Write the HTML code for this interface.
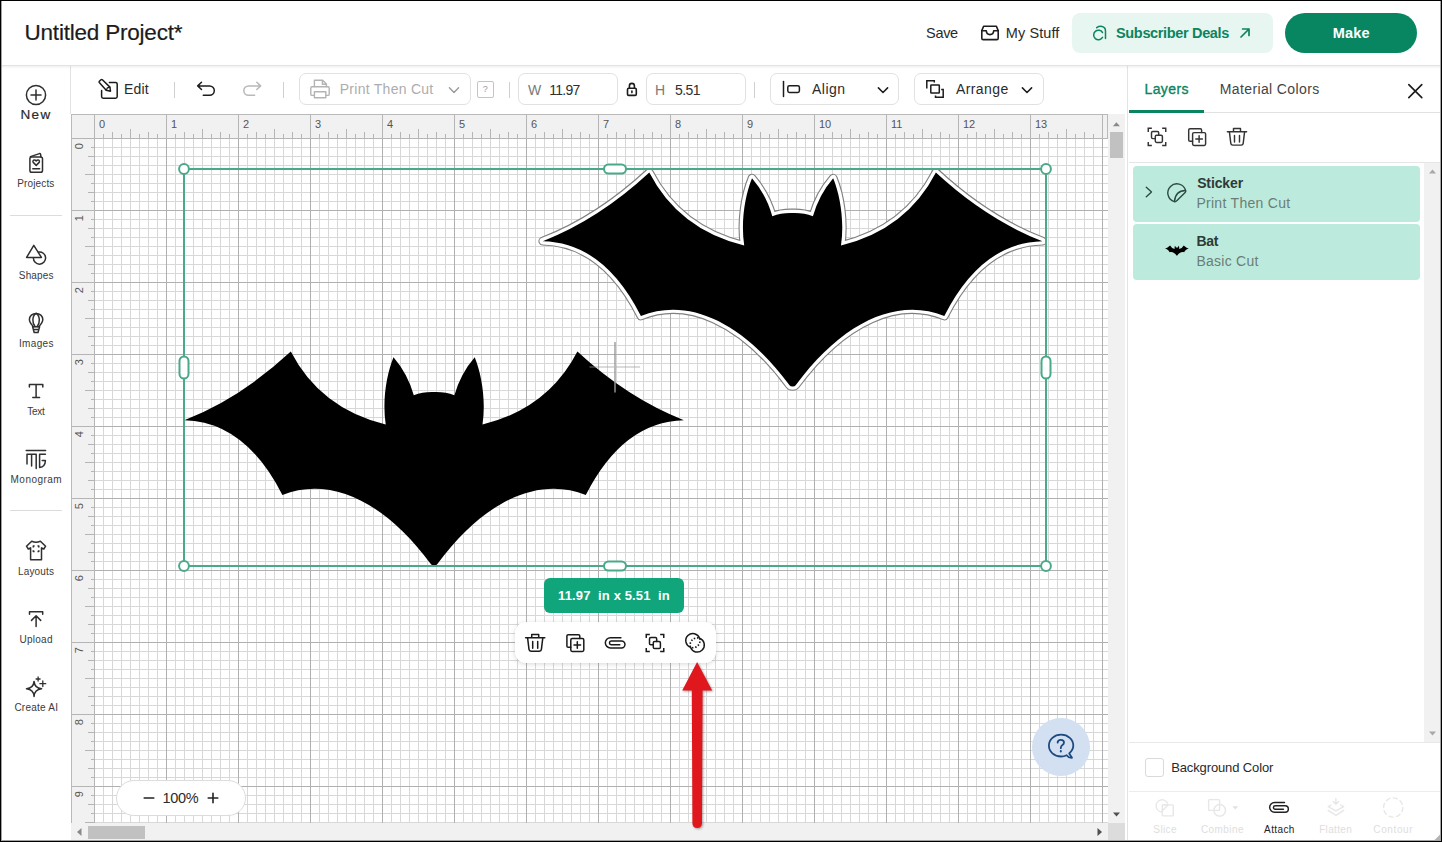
<!DOCTYPE html>
<html><head><meta charset="utf-8"><title>Design Space</title>
<style>
*{box-sizing:border-box;margin:0;padding:0}
html,body{width:1442px;height:842px;overflow:hidden;background:#fff}
body{font-family:"Liberation Sans",sans-serif;color:#222;position:relative}
#root{position:absolute;left:0;top:0;width:1442px;height:842px;overflow:hidden;background:#fff}
.abs{position:absolute}
.t{position:absolute;white-space:nowrap;line-height:1}
.rl{font-family:"Liberation Sans",sans-serif;font-size:11px;fill:#555}
svg{overflow:visible}
.ic{position:absolute;fill:none;stroke:#222;stroke-width:1.5;stroke-linecap:round;stroke-linejoin:round}
.box{position:absolute;border:1px solid #e1e1e1;border-radius:7px;background:#fff}
.vd{position:absolute;width:1px;background:#d0d0d0}
.sl{position:absolute;font-size:10px;color:#333;width:72px;left:0;text-align:center;line-height:1}
</style></head><body>
<div id="root">
<!-- HEADER -->
<div class="abs" id="hdr" style="left:0;top:0;width:1442px;height:66px;background:#fff;border-bottom:1px solid #e3e3e3"></div>
<span class="t" style="left:24.51px;top:22.15px;font-size:22.5px;color:#1c1c1c;letter-spacing:-0.206px;-webkit-text-stroke:0.2px #1c1c1c;">Untitled Project*</span>
<span class="t" style="left:926.05px;top:25.93px;font-size:14.5px;color:#2a2a2a;letter-spacing:-0.309px;">Save</span>
<svg class="ic" style="left:980px;top:24px;stroke:#1c1c1c;stroke-width:1.6" width="20" height="18" viewBox="0 0 20 18"><path d="M3.6,2.2H16.4L18.2,6.6V14.2Q18.2,15.6 16.8,15.6H3.2Q1.8,15.6 1.8,14.2V6.6Z"/><path d="M1.8,6.8H6.3Q6.5,10.6 10,10.6Q13.5,10.6 13.7,6.8H18.2"/></svg>
<span class="t" style="left:1005.74px;top:25.93px;font-size:14.5px;color:#2a2a2a;letter-spacing:0.105px;">My Stuff</span>
<div class="abs" style="left:1072px;top:13px;width:200.5px;height:39.5px;border-radius:8px;background:#e7f6f0"></div>
<svg class="ic" style="left:0;top:0;stroke:#0b8461;stroke-width:1.5;" width="1442" height="842" viewBox="0 0 1442 842"><path d="M1102.5,32.5A4.75,4.75 0 1 0 1102.5,37.4"/><path d="M1096.7,27.7C1099.4,25.8 1105.5,25.2 1105.5,31.2V38.6"/></svg>
<span class="t" style="left:1116.04px;top:25.93px;font-size:14.5px;font-weight:bold;color:#0b8461;letter-spacing:-0.346px;">Subscriber Deals</span>
<svg class="ic" style="left:1238px;top:26px;stroke:#0b8461;stroke-width:1.7" width="14" height="14" viewBox="0 0 14 14"><path d="M3,11L11,3M4.6,3H11V9.4"/></svg>
<div class="abs" style="left:1285px;top:13px;width:132px;height:39.5px;border-radius:20px;background:#088561"></div>
<span class="t" style="left:1332.86px;top:25.63px;font-size:14.5px;font-weight:bold;color:#fff;letter-spacing:0.109px;">Make</span>
<!-- SIDEBAR -->
<div class="abs" id="side" style="left:0;top:66px;width:71px;height:776px;background:#fff"></div>
<div class="abs" style="left:70px;top:66px;width:1px;height:48px;background:#e2e2e2"></div>
<div class="abs" style="left:10px;top:215px;width:52px;height:1px;background:#dcdcdc"></div>
<div class="abs" style="left:10px;top:510px;width:52px;height:1px;background:#dcdcdc"></div>
<svg class="ic" style="left:0;top:0;stroke:#2f2f2f;stroke-width:1.5;" width="1442" height="842" viewBox="0 0 1442 842"><circle cx="36" cy="95" r="9.6"/><path d="M36,90V100M31,95H41"/><rect x="29.9" y="157" width="12.6" height="15.2" rx="1.8"/><path d="M30.4,156.6L39.4,153.6Q40.4,153.4 40.6,154.4L40.9,156.8"/><path d="M36.2,165.4L33.2,162.4Q32.4,161 33.6,160.2Q35,159.4 36.2,161Q37.4,159.4 38.8,160.2Q40,161 39.2,162.4Z"/><path d="M32.8,168.7H39.6"/><path d="M33.8,245.4L26.6,257.4H41.4Z"/><path d="M38.6,252A6.1,6.1 0 1 1 33.4,257.8"/><path d="M33.4,326.8C31,324 29.4,322.4 29.4,319.6C29.4,316 32.4,313.4 36.1,313.4C39.8,313.4 42.8,316 42.8,319.6C42.8,322.4 41.2,324 38.8,326.8"/><path d="M36.1,313.4C31.8,316 32.2,323.2 35,326.6M36.1,313.4C40.4,316 40,323.2 37.2,326.6"/><path d="M32.6,326.8H39.6L38,332.5H34.2ZM33.5,329.6H38.7"/><path d="M29.4,387V384.4H42.8V387M36.1,384.4V397.4M32.8,397.4H39.6"/><path d="M26.2,450.4H45.6M27,464V454.2H36.2V468.6M31.6,454.2V466M45.4,454.2H39.6V467.6Q45.2,467 45.4,460.6H42.2"/><path d="M31.7,541.2Q36,543.4 40.4,541.2L45.6,546.2L43.8,549L41.5,547.8V559.8H30.6V547.8L28.3,549L26.5,546.2Z"/><path d="M33.3,547.4V546.1H34.6M37.5,546.1H38.8V547.4M38.8,550.3V551.6H37.5M34.6,551.6H33.3V550.3" stroke-linecap="butt"/><path d="M29.5,614.2V611.7H42.7V614.2M36.1,626.4V615.8M31.5,620.4L36.1,615.8L40.7,620.4"/><path d="M34.05,681.4Q34.6,688.2 41.6,688.8Q34.6,689.4 34.05,696.4Q33.5,689.4 26.5,688.8Q33.5,688.2 34.05,681.4Z"/><path d="M38.1,677V681M36.1,679H40.1M42.8,680.8V686.6M39.9,683.7H45.7" stroke-width="1.3"/></svg>
<span class="t" style="left:20.42px;top:108.37px;font-size:13.5px;color:#2b2b2b;letter-spacing:1.456px;-webkit-text-stroke:0.2px #2b2b2b;">New</span>
<span class="t" style="left:17.20px;top:178.83px;font-size:10px;color:#3a3a3a;letter-spacing:0.150px;">Projects</span>
<span class="t" style="left:18.85px;top:270.63px;font-size:10px;color:#3a3a3a;letter-spacing:0.140px;">Shapes</span>
<span class="t" style="left:19.00px;top:338.63px;font-size:10px;color:#3a3a3a;letter-spacing:0.330px;">Images</span>
<span class="t" style="left:27.20px;top:407.04px;font-size:10px;color:#3a3a3a;letter-spacing:-0.233px;">Text</span>
<span class="t" style="left:10.60px;top:474.63px;font-size:10px;color:#3a3a3a;letter-spacing:0.450px;">Monogram</span>
<span class="t" style="left:17.90px;top:566.74px;font-size:10px;color:#3a3a3a;letter-spacing:0.183px;">Layouts</span>
<span class="t" style="left:19.45px;top:634.63px;font-size:10px;color:#3a3a3a;letter-spacing:0.270px;">Upload</span>
<span class="t" style="left:14.40px;top:703.03px;font-size:10px;color:#3a3a3a;letter-spacing:0.238px;">Create AI</span>
<!-- TOOLBAR -->
<div class="abs" id="tb" style="left:72px;top:66px;width:1056px;height:49px;background:#fff"></div>
<div class="vd" style="left:174px;top:82px;height:16px"></div>
<div class="vd" style="left:283px;top:82px;height:16px"></div>
<div class="vd" style="left:509px;top:82px;height:16px"></div>
<div class="vd" style="left:754px;top:82px;height:16px"></div>
<div class="box" style="left:299px;top:73px;width:171.5px;height:32px"></div>
<div class="box" style="left:518px;top:73px;width:99.5px;height:32px"></div>
<div class="box" style="left:646px;top:73px;width:99.5px;height:32px"></div>
<div class="box" style="left:770px;top:73px;width:129px;height:32px"></div>
<div class="box" style="left:914px;top:73px;width:129.5px;height:32px"></div>
<div class="abs" style="left:476.5px;top:80.5px;width:17.5px;height:17px;border:1px solid #c4c4c4;border-radius:2px"></div>
<span class="t" style="left:482.84px;top:84.68px;font-size:9px;color:#999;letter-spacing:-0.520px;">?</span>
<svg class="ic" style="left:0;top:0;stroke:#1c1c1c;stroke-width:1.5;" width="1442" height="842" viewBox="0 0 1442 842"><path d="M109.4,82.4H115.6Q117.2,82.4 117.2,84V96.6Q117.2,98.2 115.6,98.2H103.2Q101.6,98.2 101.6,96.6V90.4"/><path d="M99.3,82.6Q98.7,81.9 99.4,81.2L100.9,79.8Q101.7,79.2 102.4,79.8L109.9,87.1L110.5,91.2L106.2,90.2Z"/><path d="M109.9,87.1L107.4,87.9L106.2,90.2" stroke-width="1.2"/><path d="M201.5,82.3L197.7,85.9L201.5,89.5M197.9,85.9H209.6A4.7,4.7 0 0 1 209.6,95.3H203.3"/></svg>
<svg class="ic" style="left:0;top:0;stroke:#b9b9b9;stroke-width:1.5;" width="1442" height="842" viewBox="0 0 1442 842"><path d="M256.8,82.3L260.6,85.9L256.8,89.5M260.4,85.9H248.5A4.7,4.7 0 0 0 248.5,95.3H254.6"/></svg>
<span class="t" style="left:124.08px;top:81.85px;font-size:14px;color:#2a2a2a;letter-spacing:0.180px;">Edit</span>
<svg class="ic" style="left:0;top:0;stroke:#b3b3b3;stroke-width:1.4;" width="1442" height="842" viewBox="0 0 1442 842"><path d="M314.4,86.6V80.2H322.6L326.4,84V86.6M322.4,80.4V84.2H326.2"/><path d="M314.2,95.4H312Q310.8,95.4 310.8,94.2V88Q310.8,86.8 312,86.8H328Q329.2,86.8 329.2,88V94.2Q329.2,95.4 328,95.4H326"/><path d="M314.4,91.8H325.8V97.8H314.4Z"/></svg>
<span class="t" style="left:339.78px;top:81.85px;font-size:14px;color:#adadad;letter-spacing:0.267px;">Print Then Cut</span>
<svg class="ic" style="left:0;top:0;stroke:#9a9a9a;stroke-width:1.4;" width="1442" height="842" viewBox="0 0 1442 842"><path d="M449.4,87.8L454,92.4L458.6,87.8"/></svg>
<span class="t" style="left:527.90px;top:82.95px;font-size:14px;color:#7a7a7a;letter-spacing:-1.630px;">W</span>
<span class="t" style="left:549.15px;top:82.95px;font-size:14px;color:#2f2f2f;letter-spacing:-0.693px;">11.97</span>
<span class="t" style="left:655.08px;top:82.95px;font-size:14px;color:#7a7a7a;letter-spacing:0.190px;">H</span>
<span class="t" style="left:675.04px;top:82.95px;font-size:14px;color:#2f2f2f;letter-spacing:-0.613px;">5.51</span>
<svg class="ic" style="left:0;top:0;stroke:#1c1c1c;stroke-width:1.6;" width="1442" height="842" viewBox="0 0 1442 842"><rect x="627.5" y="88.2" width="8.8" height="7.2" rx="1.2"/><path d="M629.4,88V86A2.5,2.6 0 0 1 634.4,86V88"/><path d="M631.9,91V92.6" stroke-width="1.6"/></svg>
<svg class="ic" style="left:0;top:0;stroke:#1c1c1c;stroke-width:1.5;" width="1442" height="842" viewBox="0 0 1442 842"><path d="M783.5,81.6V96.4"/><rect x="787.8" y="85.7" width="11.6" height="6.7" rx="1.6"/></svg>
<span class="t" style="left:812.00px;top:81.85px;font-size:14px;color:#2a2a2a;letter-spacing:0.497px;">Align</span>
<svg class="ic" style="left:0;top:0;stroke:#1c1c1c;stroke-width:1.5;" width="1442" height="842" viewBox="0 0 1442 842"><path d="M878.4,87.9L883,92.5L887.6,87.9M1022.4,87.9L1027,92.5L1031.6,87.9"/></svg>
<svg class="ic" style="left:0;top:0;stroke:#1c1c1c;stroke-width:1.5;" width="1442" height="842" viewBox="0 0 1442 842"><rect x="930.8" y="84.9" width="8.5" height="8.1" rx="0.5"/><path d="M926.8,88.6V80.7H934.3V82.6M935.5,95.4V97.2H943.2V89.5H941.2" stroke-linecap="butt" stroke-linejoin="miter"/></svg>
<span class="t" style="left:956.00px;top:81.85px;font-size:14px;color:#2a2a2a;letter-spacing:0.398px;">Arrange</span>
<!-- CANVAS -->
<svg id="cv" width="1037" height="709" viewBox="71 114 1037 709" style="position:absolute;left:71px;top:114px;overflow:hidden">
<defs>
<pattern id="gmin" x="94" y="138" width="9" height="9" patternUnits="userSpaceOnUse"><path d="M0.5,0V9M0,0.5H9" stroke="#d8d8d8" stroke-width="1" fill="none"/></pattern>
<pattern id="gmaj" x="94" y="138" width="72" height="72" patternUnits="userSpaceOnUse"><path d="M0.5,0V72M0,0.5H72" stroke="#b0b0b0" stroke-width="1" fill="none"/></pattern>
</defs>
<rect x="71" y="114" width="1037" height="709" fill="#fff"/>
<rect x="94" y="138" width="1014" height="685" fill="url(#gmin)"/>
<rect x="94" y="138" width="1014" height="685" fill="url(#gmaj)"/>
<rect x="71" y="114" width="1037" height="24" fill="#f1f1f1"/>
<rect x="71" y="114" width="23" height="709" fill="#f1f1f1"/>
<g shape-rendering="crispEdges">
<line x1="94.5" y1="114" x2="94.5" y2="138" stroke="#b5b5b5"/>
<text x="99.0" y="127.5" class="rl">0</text>
<line x1="103.5" y1="134" x2="103.5" y2="138" stroke="#b5b5b5"/>
<line x1="112.5" y1="131.5" x2="112.5" y2="138" stroke="#b5b5b5"/>
<line x1="121.5" y1="134" x2="121.5" y2="138" stroke="#b5b5b5"/>
<line x1="130.5" y1="129" x2="130.5" y2="138" stroke="#b5b5b5"/>
<line x1="139.5" y1="134" x2="139.5" y2="138" stroke="#b5b5b5"/>
<line x1="148.5" y1="131.5" x2="148.5" y2="138" stroke="#b5b5b5"/>
<line x1="157.5" y1="134" x2="157.5" y2="138" stroke="#b5b5b5"/>
<line x1="166.5" y1="114" x2="166.5" y2="138" stroke="#b5b5b5"/>
<text x="171.0" y="127.5" class="rl">1</text>
<line x1="175.5" y1="134" x2="175.5" y2="138" stroke="#b5b5b5"/>
<line x1="184.5" y1="131.5" x2="184.5" y2="138" stroke="#b5b5b5"/>
<line x1="193.5" y1="134" x2="193.5" y2="138" stroke="#b5b5b5"/>
<line x1="202.5" y1="129" x2="202.5" y2="138" stroke="#b5b5b5"/>
<line x1="211.5" y1="134" x2="211.5" y2="138" stroke="#b5b5b5"/>
<line x1="220.5" y1="131.5" x2="220.5" y2="138" stroke="#b5b5b5"/>
<line x1="229.5" y1="134" x2="229.5" y2="138" stroke="#b5b5b5"/>
<line x1="238.5" y1="114" x2="238.5" y2="138" stroke="#b5b5b5"/>
<text x="243.0" y="127.5" class="rl">2</text>
<line x1="247.5" y1="134" x2="247.5" y2="138" stroke="#b5b5b5"/>
<line x1="256.5" y1="131.5" x2="256.5" y2="138" stroke="#b5b5b5"/>
<line x1="265.5" y1="134" x2="265.5" y2="138" stroke="#b5b5b5"/>
<line x1="274.5" y1="129" x2="274.5" y2="138" stroke="#b5b5b5"/>
<line x1="283.5" y1="134" x2="283.5" y2="138" stroke="#b5b5b5"/>
<line x1="292.5" y1="131.5" x2="292.5" y2="138" stroke="#b5b5b5"/>
<line x1="301.5" y1="134" x2="301.5" y2="138" stroke="#b5b5b5"/>
<line x1="310.5" y1="114" x2="310.5" y2="138" stroke="#b5b5b5"/>
<text x="315.0" y="127.5" class="rl">3</text>
<line x1="319.5" y1="134" x2="319.5" y2="138" stroke="#b5b5b5"/>
<line x1="328.5" y1="131.5" x2="328.5" y2="138" stroke="#b5b5b5"/>
<line x1="337.5" y1="134" x2="337.5" y2="138" stroke="#b5b5b5"/>
<line x1="346.5" y1="129" x2="346.5" y2="138" stroke="#b5b5b5"/>
<line x1="355.5" y1="134" x2="355.5" y2="138" stroke="#b5b5b5"/>
<line x1="364.5" y1="131.5" x2="364.5" y2="138" stroke="#b5b5b5"/>
<line x1="373.5" y1="134" x2="373.5" y2="138" stroke="#b5b5b5"/>
<line x1="382.5" y1="114" x2="382.5" y2="138" stroke="#b5b5b5"/>
<text x="387.0" y="127.5" class="rl">4</text>
<line x1="391.5" y1="134" x2="391.5" y2="138" stroke="#b5b5b5"/>
<line x1="400.5" y1="131.5" x2="400.5" y2="138" stroke="#b5b5b5"/>
<line x1="409.5" y1="134" x2="409.5" y2="138" stroke="#b5b5b5"/>
<line x1="418.5" y1="129" x2="418.5" y2="138" stroke="#b5b5b5"/>
<line x1="427.5" y1="134" x2="427.5" y2="138" stroke="#b5b5b5"/>
<line x1="436.5" y1="131.5" x2="436.5" y2="138" stroke="#b5b5b5"/>
<line x1="445.5" y1="134" x2="445.5" y2="138" stroke="#b5b5b5"/>
<line x1="454.5" y1="114" x2="454.5" y2="138" stroke="#b5b5b5"/>
<text x="459.0" y="127.5" class="rl">5</text>
<line x1="463.5" y1="134" x2="463.5" y2="138" stroke="#b5b5b5"/>
<line x1="472.5" y1="131.5" x2="472.5" y2="138" stroke="#b5b5b5"/>
<line x1="481.5" y1="134" x2="481.5" y2="138" stroke="#b5b5b5"/>
<line x1="490.5" y1="129" x2="490.5" y2="138" stroke="#b5b5b5"/>
<line x1="499.5" y1="134" x2="499.5" y2="138" stroke="#b5b5b5"/>
<line x1="508.5" y1="131.5" x2="508.5" y2="138" stroke="#b5b5b5"/>
<line x1="517.5" y1="134" x2="517.5" y2="138" stroke="#b5b5b5"/>
<line x1="526.5" y1="114" x2="526.5" y2="138" stroke="#b5b5b5"/>
<text x="531.0" y="127.5" class="rl">6</text>
<line x1="535.5" y1="134" x2="535.5" y2="138" stroke="#b5b5b5"/>
<line x1="544.5" y1="131.5" x2="544.5" y2="138" stroke="#b5b5b5"/>
<line x1="553.5" y1="134" x2="553.5" y2="138" stroke="#b5b5b5"/>
<line x1="562.5" y1="129" x2="562.5" y2="138" stroke="#b5b5b5"/>
<line x1="571.5" y1="134" x2="571.5" y2="138" stroke="#b5b5b5"/>
<line x1="580.5" y1="131.5" x2="580.5" y2="138" stroke="#b5b5b5"/>
<line x1="589.5" y1="134" x2="589.5" y2="138" stroke="#b5b5b5"/>
<line x1="598.5" y1="114" x2="598.5" y2="138" stroke="#b5b5b5"/>
<text x="603.0" y="127.5" class="rl">7</text>
<line x1="607.5" y1="134" x2="607.5" y2="138" stroke="#b5b5b5"/>
<line x1="616.5" y1="131.5" x2="616.5" y2="138" stroke="#b5b5b5"/>
<line x1="625.5" y1="134" x2="625.5" y2="138" stroke="#b5b5b5"/>
<line x1="634.5" y1="129" x2="634.5" y2="138" stroke="#b5b5b5"/>
<line x1="643.5" y1="134" x2="643.5" y2="138" stroke="#b5b5b5"/>
<line x1="652.5" y1="131.5" x2="652.5" y2="138" stroke="#b5b5b5"/>
<line x1="661.5" y1="134" x2="661.5" y2="138" stroke="#b5b5b5"/>
<line x1="670.5" y1="114" x2="670.5" y2="138" stroke="#b5b5b5"/>
<text x="675.0" y="127.5" class="rl">8</text>
<line x1="679.5" y1="134" x2="679.5" y2="138" stroke="#b5b5b5"/>
<line x1="688.5" y1="131.5" x2="688.5" y2="138" stroke="#b5b5b5"/>
<line x1="697.5" y1="134" x2="697.5" y2="138" stroke="#b5b5b5"/>
<line x1="706.5" y1="129" x2="706.5" y2="138" stroke="#b5b5b5"/>
<line x1="715.5" y1="134" x2="715.5" y2="138" stroke="#b5b5b5"/>
<line x1="724.5" y1="131.5" x2="724.5" y2="138" stroke="#b5b5b5"/>
<line x1="733.5" y1="134" x2="733.5" y2="138" stroke="#b5b5b5"/>
<line x1="742.5" y1="114" x2="742.5" y2="138" stroke="#b5b5b5"/>
<text x="747.0" y="127.5" class="rl">9</text>
<line x1="751.5" y1="134" x2="751.5" y2="138" stroke="#b5b5b5"/>
<line x1="760.5" y1="131.5" x2="760.5" y2="138" stroke="#b5b5b5"/>
<line x1="769.5" y1="134" x2="769.5" y2="138" stroke="#b5b5b5"/>
<line x1="778.5" y1="129" x2="778.5" y2="138" stroke="#b5b5b5"/>
<line x1="787.5" y1="134" x2="787.5" y2="138" stroke="#b5b5b5"/>
<line x1="796.5" y1="131.5" x2="796.5" y2="138" stroke="#b5b5b5"/>
<line x1="805.5" y1="134" x2="805.5" y2="138" stroke="#b5b5b5"/>
<line x1="814.5" y1="114" x2="814.5" y2="138" stroke="#b5b5b5"/>
<text x="819.0" y="127.5" class="rl">10</text>
<line x1="823.5" y1="134" x2="823.5" y2="138" stroke="#b5b5b5"/>
<line x1="832.5" y1="131.5" x2="832.5" y2="138" stroke="#b5b5b5"/>
<line x1="841.5" y1="134" x2="841.5" y2="138" stroke="#b5b5b5"/>
<line x1="850.5" y1="129" x2="850.5" y2="138" stroke="#b5b5b5"/>
<line x1="859.5" y1="134" x2="859.5" y2="138" stroke="#b5b5b5"/>
<line x1="868.5" y1="131.5" x2="868.5" y2="138" stroke="#b5b5b5"/>
<line x1="877.5" y1="134" x2="877.5" y2="138" stroke="#b5b5b5"/>
<line x1="886.5" y1="114" x2="886.5" y2="138" stroke="#b5b5b5"/>
<text x="891.0" y="127.5" class="rl">11</text>
<line x1="895.5" y1="134" x2="895.5" y2="138" stroke="#b5b5b5"/>
<line x1="904.5" y1="131.5" x2="904.5" y2="138" stroke="#b5b5b5"/>
<line x1="913.5" y1="134" x2="913.5" y2="138" stroke="#b5b5b5"/>
<line x1="922.5" y1="129" x2="922.5" y2="138" stroke="#b5b5b5"/>
<line x1="931.5" y1="134" x2="931.5" y2="138" stroke="#b5b5b5"/>
<line x1="940.5" y1="131.5" x2="940.5" y2="138" stroke="#b5b5b5"/>
<line x1="949.5" y1="134" x2="949.5" y2="138" stroke="#b5b5b5"/>
<line x1="958.5" y1="114" x2="958.5" y2="138" stroke="#b5b5b5"/>
<text x="963.0" y="127.5" class="rl">12</text>
<line x1="967.5" y1="134" x2="967.5" y2="138" stroke="#b5b5b5"/>
<line x1="976.5" y1="131.5" x2="976.5" y2="138" stroke="#b5b5b5"/>
<line x1="985.5" y1="134" x2="985.5" y2="138" stroke="#b5b5b5"/>
<line x1="994.5" y1="129" x2="994.5" y2="138" stroke="#b5b5b5"/>
<line x1="1003.5" y1="134" x2="1003.5" y2="138" stroke="#b5b5b5"/>
<line x1="1012.5" y1="131.5" x2="1012.5" y2="138" stroke="#b5b5b5"/>
<line x1="1021.5" y1="134" x2="1021.5" y2="138" stroke="#b5b5b5"/>
<line x1="1030.5" y1="114" x2="1030.5" y2="138" stroke="#b5b5b5"/>
<text x="1035.0" y="127.5" class="rl">13</text>
<line x1="1039.5" y1="134" x2="1039.5" y2="138" stroke="#b5b5b5"/>
<line x1="1048.5" y1="131.5" x2="1048.5" y2="138" stroke="#b5b5b5"/>
<line x1="1057.5" y1="134" x2="1057.5" y2="138" stroke="#b5b5b5"/>
<line x1="1066.5" y1="129" x2="1066.5" y2="138" stroke="#b5b5b5"/>
<line x1="1075.5" y1="134" x2="1075.5" y2="138" stroke="#b5b5b5"/>
<line x1="1084.5" y1="131.5" x2="1084.5" y2="138" stroke="#b5b5b5"/>
<line x1="1093.5" y1="134" x2="1093.5" y2="138" stroke="#b5b5b5"/>
<line x1="1102.5" y1="114" x2="1102.5" y2="138" stroke="#b5b5b5"/>
<text x="1107.0" y="127.5" class="rl">14</text>
<line x1="71" y1="138.5" x2="94" y2="138.5" stroke="#b5b5b5"/>
<text transform="translate(82.5,143.0) rotate(-90)" text-anchor="end" class="rl">0</text>
<line x1="90.5" y1="147.5" x2="94" y2="147.5" stroke="#b5b5b5"/>
<line x1="88" y1="156.5" x2="94" y2="156.5" stroke="#b5b5b5"/>
<line x1="90.5" y1="165.5" x2="94" y2="165.5" stroke="#b5b5b5"/>
<line x1="84.5" y1="174.5" x2="94" y2="174.5" stroke="#b5b5b5"/>
<line x1="90.5" y1="183.5" x2="94" y2="183.5" stroke="#b5b5b5"/>
<line x1="88" y1="192.5" x2="94" y2="192.5" stroke="#b5b5b5"/>
<line x1="90.5" y1="201.5" x2="94" y2="201.5" stroke="#b5b5b5"/>
<line x1="71" y1="210.5" x2="94" y2="210.5" stroke="#b5b5b5"/>
<text transform="translate(82.5,215.0) rotate(-90)" text-anchor="end" class="rl">1</text>
<line x1="90.5" y1="219.5" x2="94" y2="219.5" stroke="#b5b5b5"/>
<line x1="88" y1="228.5" x2="94" y2="228.5" stroke="#b5b5b5"/>
<line x1="90.5" y1="237.5" x2="94" y2="237.5" stroke="#b5b5b5"/>
<line x1="84.5" y1="246.5" x2="94" y2="246.5" stroke="#b5b5b5"/>
<line x1="90.5" y1="255.5" x2="94" y2="255.5" stroke="#b5b5b5"/>
<line x1="88" y1="264.5" x2="94" y2="264.5" stroke="#b5b5b5"/>
<line x1="90.5" y1="273.5" x2="94" y2="273.5" stroke="#b5b5b5"/>
<line x1="71" y1="282.5" x2="94" y2="282.5" stroke="#b5b5b5"/>
<text transform="translate(82.5,287.0) rotate(-90)" text-anchor="end" class="rl">2</text>
<line x1="90.5" y1="291.5" x2="94" y2="291.5" stroke="#b5b5b5"/>
<line x1="88" y1="300.5" x2="94" y2="300.5" stroke="#b5b5b5"/>
<line x1="90.5" y1="309.5" x2="94" y2="309.5" stroke="#b5b5b5"/>
<line x1="84.5" y1="318.5" x2="94" y2="318.5" stroke="#b5b5b5"/>
<line x1="90.5" y1="327.5" x2="94" y2="327.5" stroke="#b5b5b5"/>
<line x1="88" y1="336.5" x2="94" y2="336.5" stroke="#b5b5b5"/>
<line x1="90.5" y1="345.5" x2="94" y2="345.5" stroke="#b5b5b5"/>
<line x1="71" y1="354.5" x2="94" y2="354.5" stroke="#b5b5b5"/>
<text transform="translate(82.5,359.0) rotate(-90)" text-anchor="end" class="rl">3</text>
<line x1="90.5" y1="363.5" x2="94" y2="363.5" stroke="#b5b5b5"/>
<line x1="88" y1="372.5" x2="94" y2="372.5" stroke="#b5b5b5"/>
<line x1="90.5" y1="381.5" x2="94" y2="381.5" stroke="#b5b5b5"/>
<line x1="84.5" y1="390.5" x2="94" y2="390.5" stroke="#b5b5b5"/>
<line x1="90.5" y1="399.5" x2="94" y2="399.5" stroke="#b5b5b5"/>
<line x1="88" y1="408.5" x2="94" y2="408.5" stroke="#b5b5b5"/>
<line x1="90.5" y1="417.5" x2="94" y2="417.5" stroke="#b5b5b5"/>
<line x1="71" y1="426.5" x2="94" y2="426.5" stroke="#b5b5b5"/>
<text transform="translate(82.5,431.0) rotate(-90)" text-anchor="end" class="rl">4</text>
<line x1="90.5" y1="435.5" x2="94" y2="435.5" stroke="#b5b5b5"/>
<line x1="88" y1="444.5" x2="94" y2="444.5" stroke="#b5b5b5"/>
<line x1="90.5" y1="453.5" x2="94" y2="453.5" stroke="#b5b5b5"/>
<line x1="84.5" y1="462.5" x2="94" y2="462.5" stroke="#b5b5b5"/>
<line x1="90.5" y1="471.5" x2="94" y2="471.5" stroke="#b5b5b5"/>
<line x1="88" y1="480.5" x2="94" y2="480.5" stroke="#b5b5b5"/>
<line x1="90.5" y1="489.5" x2="94" y2="489.5" stroke="#b5b5b5"/>
<line x1="71" y1="498.5" x2="94" y2="498.5" stroke="#b5b5b5"/>
<text transform="translate(82.5,503.0) rotate(-90)" text-anchor="end" class="rl">5</text>
<line x1="90.5" y1="507.5" x2="94" y2="507.5" stroke="#b5b5b5"/>
<line x1="88" y1="516.5" x2="94" y2="516.5" stroke="#b5b5b5"/>
<line x1="90.5" y1="525.5" x2="94" y2="525.5" stroke="#b5b5b5"/>
<line x1="84.5" y1="534.5" x2="94" y2="534.5" stroke="#b5b5b5"/>
<line x1="90.5" y1="543.5" x2="94" y2="543.5" stroke="#b5b5b5"/>
<line x1="88" y1="552.5" x2="94" y2="552.5" stroke="#b5b5b5"/>
<line x1="90.5" y1="561.5" x2="94" y2="561.5" stroke="#b5b5b5"/>
<line x1="71" y1="570.5" x2="94" y2="570.5" stroke="#b5b5b5"/>
<text transform="translate(82.5,575.0) rotate(-90)" text-anchor="end" class="rl">6</text>
<line x1="90.5" y1="579.5" x2="94" y2="579.5" stroke="#b5b5b5"/>
<line x1="88" y1="588.5" x2="94" y2="588.5" stroke="#b5b5b5"/>
<line x1="90.5" y1="597.5" x2="94" y2="597.5" stroke="#b5b5b5"/>
<line x1="84.5" y1="606.5" x2="94" y2="606.5" stroke="#b5b5b5"/>
<line x1="90.5" y1="615.5" x2="94" y2="615.5" stroke="#b5b5b5"/>
<line x1="88" y1="624.5" x2="94" y2="624.5" stroke="#b5b5b5"/>
<line x1="90.5" y1="633.5" x2="94" y2="633.5" stroke="#b5b5b5"/>
<line x1="71" y1="642.5" x2="94" y2="642.5" stroke="#b5b5b5"/>
<text transform="translate(82.5,647.0) rotate(-90)" text-anchor="end" class="rl">7</text>
<line x1="90.5" y1="651.5" x2="94" y2="651.5" stroke="#b5b5b5"/>
<line x1="88" y1="660.5" x2="94" y2="660.5" stroke="#b5b5b5"/>
<line x1="90.5" y1="669.5" x2="94" y2="669.5" stroke="#b5b5b5"/>
<line x1="84.5" y1="678.5" x2="94" y2="678.5" stroke="#b5b5b5"/>
<line x1="90.5" y1="687.5" x2="94" y2="687.5" stroke="#b5b5b5"/>
<line x1="88" y1="696.5" x2="94" y2="696.5" stroke="#b5b5b5"/>
<line x1="90.5" y1="705.5" x2="94" y2="705.5" stroke="#b5b5b5"/>
<line x1="71" y1="714.5" x2="94" y2="714.5" stroke="#b5b5b5"/>
<text transform="translate(82.5,719.0) rotate(-90)" text-anchor="end" class="rl">8</text>
<line x1="90.5" y1="723.5" x2="94" y2="723.5" stroke="#b5b5b5"/>
<line x1="88" y1="732.5" x2="94" y2="732.5" stroke="#b5b5b5"/>
<line x1="90.5" y1="741.5" x2="94" y2="741.5" stroke="#b5b5b5"/>
<line x1="84.5" y1="750.5" x2="94" y2="750.5" stroke="#b5b5b5"/>
<line x1="90.5" y1="759.5" x2="94" y2="759.5" stroke="#b5b5b5"/>
<line x1="88" y1="768.5" x2="94" y2="768.5" stroke="#b5b5b5"/>
<line x1="90.5" y1="777.5" x2="94" y2="777.5" stroke="#b5b5b5"/>
<line x1="71" y1="786.5" x2="94" y2="786.5" stroke="#b5b5b5"/>
<text transform="translate(82.5,791.0) rotate(-90)" text-anchor="end" class="rl">9</text>
<line x1="90.5" y1="795.5" x2="94" y2="795.5" stroke="#b5b5b5"/>
<line x1="88" y1="804.5" x2="94" y2="804.5" stroke="#b5b5b5"/>
<line x1="90.5" y1="813.5" x2="94" y2="813.5" stroke="#b5b5b5"/>
<line x1="84.5" y1="822.5" x2="94" y2="822.5" stroke="#b5b5b5"/>
<line x1="71" y1="138.5" x2="1108" y2="138.5" stroke="#b5b5b5"/>
<line x1="94.5" y1="114" x2="94.5" y2="823" stroke="#b5b5b5"/>
<line x1="71" y1="114.5" x2="1108" y2="114.5" stroke="#b9b9b9"/>
<line x1="71.5" y1="114" x2="71.5" y2="823" stroke="#b9b9b9"/>
<line x1="1107.5" y1="114" x2="1107.5" y2="138" stroke="#b9b9b9"/>
</g>
<!-- bat 1 -->
<path d="M434.10,392.00Q423.10,391.60 413.80,395.20Q407.60,373.50 393.50,357.20C386.60,374.00 382.10,400.00 385.70,424.60Q320.10,408.50 290.80,351.60Q240.10,398.50 184.30,420.20Q245.10,421.50 282.40,495.00C328.20,476.20 382.90,499.10 431.00,564.20Q431.90,565.40 434.10,565.40Q436.30,565.40 437.20,564.20C485.30,499.10 540.00,476.20 585.80,495.00Q623.10,421.50 683.90,420.20Q628.10,398.50 577.40,351.60Q548.10,408.50 482.50,424.60C486.10,400.00 481.60,374.00 474.70,357.20Q460.60,373.50 454.40,395.20Q445.10,391.60 434.10,392.00Z" fill="#000"/>
<!-- bat 2 sticker -->
<path d="M792.60,213.00Q781.60,212.60 772.30,216.20Q766.10,194.50 752.00,178.20C745.10,195.00 740.60,221.00 744.20,245.60Q678.60,229.50 649.30,172.60Q598.60,219.50 542.80,241.20Q603.60,242.50 640.90,316.00C686.70,297.20 741.40,320.10 789.50,385.20Q790.40,386.40 792.60,386.40Q794.80,386.40 795.70,385.20C843.80,320.10 898.50,297.20 944.30,316.00Q981.60,242.50 1042.40,241.20Q986.60,219.50 935.90,172.60Q906.60,229.50 841.00,245.60C844.60,221.00 840.10,195.00 833.20,178.20Q819.10,194.50 812.90,216.20Q803.60,212.60 792.60,213.00Z" fill="none" stroke="#7f7f7f" stroke-width="8.8" stroke-linejoin="round"/>
<path d="M792.60,213.00Q781.60,212.60 772.30,216.20Q766.10,194.50 752.00,178.20C745.10,195.00 740.60,221.00 744.20,245.60Q678.60,229.50 649.30,172.60Q598.60,219.50 542.80,241.20Q603.60,242.50 640.90,316.00C686.70,297.20 741.40,320.10 789.50,385.20Q790.40,386.40 792.60,386.40Q794.80,386.40 795.70,385.20C843.80,320.10 898.50,297.20 944.30,316.00Q981.60,242.50 1042.40,241.20Q986.60,219.50 935.90,172.60Q906.60,229.50 841.00,245.60C844.60,221.00 840.10,195.00 833.20,178.20Q819.10,194.50 812.90,216.20Q803.60,212.60 792.60,213.00Z" fill="none" stroke="#fff" stroke-width="6.6" stroke-linejoin="round"/>
<path d="M792.60,213.00Q781.60,212.60 772.30,216.20Q766.10,194.50 752.00,178.20C745.10,195.00 740.60,221.00 744.20,245.60Q678.60,229.50 649.30,172.60Q598.60,219.50 542.80,241.20Q603.60,242.50 640.90,316.00C686.70,297.20 741.40,320.10 789.50,385.20Q790.40,386.40 792.60,386.40Q794.80,386.40 795.70,385.20C843.80,320.10 898.50,297.20 944.30,316.00Q981.60,242.50 1042.40,241.20Q986.60,219.50 935.90,172.60Q906.60,229.50 841.00,245.60C844.60,221.00 840.10,195.00 833.20,178.20Q819.10,194.50 812.90,216.20Q803.60,212.60 792.60,213.00Z" fill="#000"/>
<!-- crosshair -->
<g stroke="#999" opacity="0.7" fill="none"><path d="M615,342V392.5" stroke-width="2"/><path d="M589.5,367H640" stroke-width="1"/></g>
<!-- selection -->
<rect x="184" y="169" width="862" height="397" fill="none" stroke="#4aa988" stroke-width="2"/>
<g fill="#fff" stroke="#4aa988" stroke-width="2">
<circle cx="184" cy="169" r="4.9"/><circle cx="1046" cy="169" r="4.9"/><circle cx="184" cy="566" r="4.9"/><circle cx="1046" cy="566" r="4.9"/>
<rect x="604" y="164.5" width="22" height="9" rx="4.5"/><rect x="604" y="561.5" width="22" height="9" rx="4.5"/>
<rect x="179.5" y="356.5" width="9" height="22" rx="4.5"/><rect x="1041.5" y="356.5" width="9" height="22" rx="4.5"/>
</g>
</svg>
<div class="abs" style="left:544px;top:578px;width:139.7px;height:35.3px;border-radius:6px;background:#10a57b"></div>
<span class="t" style="left:558.12px;top:588.70px;font-size:13px;font-weight:bold;color:#fff;letter-spacing:0.133px;">11.97&nbsp;&nbsp;in x 5.51&nbsp;&nbsp;in</span>
<div class="abs" style="left:514.5px;top:622px;width:201px;height:40.5px;border-radius:11px;background:#fff;box-shadow:0 1px 5px rgba(0,0,0,0.16)"></div>
<svg class="ic" style="left:0;top:0;stroke:#1a1a1a;stroke-width:1.5;" width="1442" height="842" viewBox="0 0 1442 842"><path d="M525.6,637.8H544.8000000000001M531.7,637.8V634.5H538.7V637.8"/><path d="M527.6,637.8L529.0,649.4Q529.2,651.2 531.0,651.2H539.4000000000001Q541.2,651.2 541.4000000000001,649.4L542.8000000000001,637.8"/><path d="M532.7,641.6V648.2M537.7,641.6V648.2"/><rect x="570.8" y="638.6" width="13" height="12.8" rx="1.4"/><path d="M570.8,647.2H568.1999999999999Q566.9,647.2 566.9,645.9V636Q566.9,634.7 568.1999999999999,634.7H578.5Q579.8,634.7 579.8,636V638.6"/><path d="M577.3,641.7V648.3M574.0,645H580.5999999999999"/><path d="M620.92,637.71H610.42A5.09,5.09 0 0 0 610.42,647.89H621.55A3.41,3.41 0 0 0 621.55,641.07H611.16A1.84,1.84 0 0 0 611.16,644.74H619.77"/><path d="M646.25,638.0V634.4H649.85M660.15,634.4H663.75V638.0M663.75,648.0V651.6H660.15M649.85,651.6H646.25V648.0" stroke-linecap="butt" stroke-linejoin="miter"/><rect x="653.3" y="641.4" width="7.1" height="7.1" rx="1.3"/><path d="M653.3,644.7H650.8Q649.5,644.7 649.5,643.4V638.9Q649.5,637.6 650.8,637.6H655.4Q656.7,637.6 656.7,638.9V641.4"/><path d="M699.6,638.3A7.1,7.1 0 1 0 690.5,647.3A7.1,7.1 0 1 0 699.6,638.3Z"/><path d="M699.6,638.3A7.1,7.1 0 0 1 690.5,647.3A7.1,7.1 0 0 1 699.6,638.3" stroke-dasharray="1.5 1.7" stroke-linecap="butt" stroke-width="1.6"/></svg>
<div class="abs" style="left:116px;top:780px;width:130px;height:36px;border-radius:18px;background:#fff;border:1px solid #dcdcdc"></div>
<svg class="ic" style="left:0;top:0;stroke:#222;stroke-width:1.6;" width="1442" height="842" viewBox="0 0 1442 842"><path d="M144.2,798H153.8M208.2,798H217.8M213,793.2V802.8"/></svg>
<span class="t" style="left:162.41px;top:790.93px;font-size:14.5px;color:#2a2a2a;letter-spacing:-0.275px;">100%</span>
<div class="abs" style="left:1032px;top:718px;width:58px;height:58px;border-radius:29px;background:#d2e0f1"></div>
<svg class="ic" style="left:0;top:0;stroke:#1e4a80;stroke-width:1.8;" width="1442" height="842" viewBox="0 0 1442 842"><path d="M1066.6,755.2Q1064,756.5 1061.1,756.5C1054.2,756.5 1048.9,751.8 1048.9,745.6C1048.9,739.4 1054.2,734.7 1061.1,734.7C1068,734.7 1073.3,739.4 1073.3,745.6C1073.3,748.6 1071.6,751.4 1069.2,753.4L1072,757.8Q1068.6,758 1066.6,755.2Z"/></svg>
<svg class="ic" style="left:0;top:0;stroke:#1e4a80;stroke-width:1.8;" width="1442" height="842" viewBox="0 0 1442 842"><path d="M1057.6,742.6Q1057.8,739.9 1060.8,739.9Q1064,739.9 1064,742.6Q1064,744.2 1062.2,745.3Q1060.8,746.2 1060.8,748.2"/><path d="M1060.8,751V751.6" stroke-width="2"/></svg>
<!-- SCROLLBARS -->
<div class="abs" style="left:1108px;top:114px;width:17px;height:709px;background:#f1f1f1"></div>
<div class="abs" style="left:1110px;top:132px;width:13px;height:26px;background:#c1c1c1"></div>
<div class="abs" style="left:71px;top:823px;width:1037px;height:17px;background:#f1f1f1"></div>
<div class="abs" style="left:88px;top:826px;width:57px;height:12.5px;background:#c1c1c1"></div>
<div class="abs" style="left:1108px;top:823px;width:17px;height:17px;background:#dcdcdc"></div>
<div class="abs" style="left:1125px;top:66px;width:2px;height:776px;background:#fff"></div>
<svg class="abs" style="left:0;top:0" width="1442" height="842" viewBox="0 0 1442 842"><path d="M1112.9,126.2L1116.4,122.2L1119.9,126.2Z" fill="#8a8a8a"/><path d="M1113,812.5L1116.5,816.5L1120,812.5Z" fill="#505050"/><path d="M81.5,828L77,832L81.5,836Z" fill="#8a8a8a"/><path d="M1097.5,828L1102,832L1097.5,836Z" fill="#505050"/></svg>
<svg class="abs" style="left:0;top:0" width="1442" height="842" viewBox="0 0 1442 842"><path d="M697.1,662L712.2,690.4H702.6L702,823.3Q701.9,828 697.2,828Q692.5,828 692.4,823.3L691.8,690.4H682.2Z" fill="#e0181d" style="filter:drop-shadow(1px 1px 1.2px rgba(0,0,0,0.35))"/></svg>
<!-- RIGHT PANEL -->
<div class="abs" id="rp" style="left:1127px;top:66px;width:315px;height:776px;background:#fff;border-left:1px solid #e3e3e3"></div>
<span class="t" style="left:1144.48px;top:82.25px;font-size:14px;color:#0b8461;letter-spacing:0.402px;-webkit-text-stroke:0.35px #0b8461;">Layers</span>
<span class="t" style="left:1219.78px;top:82.25px;font-size:14px;color:#444;letter-spacing:0.376px;">Material Colors</span>
<div class="abs" style="left:1129px;top:112px;width:312px;height:1px;background:#e2e2e2"></div>
<div class="abs" style="left:1129px;top:110px;width:75px;height:3px;background:#0b8461"></div>
<svg class="ic" style="left:0;top:0;stroke:#1c1c1c;stroke-width:1.6;" width="1442" height="842" viewBox="0 0 1442 842"><path d="M1408.8,84.6L1421.8,97.6M1421.8,84.6L1408.8,97.6"/></svg>
<svg class="ic" style="left:0;top:0;stroke:#333;stroke-width:1.45;" width="1442" height="842" viewBox="0 0 1442 842"><path d="M1148.25,131.9V128.3H1151.85M1162.15,128.3H1165.75V131.9M1165.75,141.9V145.5H1162.15M1151.85,145.5H1148.25V141.9" stroke-linecap="butt" stroke-linejoin="miter"/><rect x="1155.3" y="135.3" width="7.1" height="7.1" rx="1.3"/><path d="M1155.3,138.6H1152.8Q1151.5,138.6 1151.5,137.3V132.8Q1151.5,131.5 1152.8,131.5H1157.4Q1158.7,131.5 1158.7,132.8V135.3"/><rect x="1192.6" y="132.6" width="13" height="12.8" rx="1.4"/><path d="M1192.6,141.2H1190.0Q1188.6999999999998,141.2 1188.6999999999998,139.9V130Q1188.6999999999998,128.7 1190.0,128.7H1200.3Q1201.6,128.7 1201.6,130V132.6"/><path d="M1199.1,135.7V142.3M1195.8,139H1202.3999999999999"/><path d="M1227.4,131.70000000000002H1246.6M1233.5,131.70000000000002V128.4H1240.5V131.70000000000002"/><path d="M1229.4,131.70000000000002L1230.8,143.3Q1231,145.1 1232.8,145.1H1241.2Q1243,145.1 1243.2,143.3L1244.6,131.70000000000002"/><path d="M1234.5,135.5V142.1M1239.5,135.5V142.1"/></svg>
<div class="abs" style="left:1129px;top:162px;width:312px;height:1px;background:#e6e6e6"></div>
<div class="abs" style="left:1424px;top:163px;width:17px;height:579px;background:#f1f1f1"></div>
<svg class="abs" style="left:0;top:0" width="1442" height="842" viewBox="0 0 1442 842"><path d="M1429,173.6L1432.5,169.6L1436,173.6Z" fill="#a8a8a8"/><path d="M1429,731.6L1432.5,735.6L1436,731.6Z" fill="#a8a8a8"/></svg>
<div class="abs" style="left:1133px;top:166px;width:287px;height:55.7px;border-radius:4px;background:#bcebdd"></div>
<div class="abs" style="left:1133px;top:224.3px;width:287px;height:55.4px;border-radius:4px;background:#bcebdd"></div>
<svg class="ic" style="left:0;top:0;stroke:#2b4a42;stroke-width:1.4;" width="1442" height="842" viewBox="0 0 1442 842"><path d="M1146.3,187.2L1151.5,191.9L1146.3,196.7"/><path d="M1185.6,190.5A9.05,9.05 0 1 0 1174.35,201.6Q1175.6,201.9 1176.5,201.1L1185.4,192.2Q1186,191.4 1185.6,190.5Z"/><path d="M1185.6,190.5Q1175.2,190.8 1174.5,201.5"/></svg>
<span class="t" style="left:1197.15px;top:176.25px;font-size:14px;font-weight:bold;color:#2e3a37;letter-spacing:-0.122px;">Sticker</span>
<span class="t" style="left:1196.38px;top:195.75px;font-size:14px;color:#6b7d77;letter-spacing:0.290px;">Print Then Cut</span>
<span class="t" style="left:1196.59px;top:234.05px;font-size:14px;font-weight:bold;color:#2e3a37;letter-spacing:-0.380px;">Bat</span>
<span class="t" style="left:1196.38px;top:253.75px;font-size:14px;color:#6b7d77;letter-spacing:0.259px;">Basic Cut</span>
<svg class="abs" style="left:0;top:0" width="1442" height="842" viewBox="0 0 1442 842"><g transform="translate(1165,245.5) scale(0.04768) translate(-184.5,-351.6)"><path d="M434.10,392.00Q423.10,391.60 413.80,395.20Q407.60,373.50 393.50,357.20C386.60,374.00 382.10,400.00 385.70,424.60Q320.10,408.50 290.80,351.60Q240.10,398.50 184.30,420.20Q245.10,421.50 282.40,495.00C328.20,476.20 382.90,499.10 431.00,564.20Q431.90,565.40 434.10,565.40Q436.30,565.40 437.20,564.20C485.30,499.10 540.00,476.20 585.80,495.00Q623.10,421.50 683.90,420.20Q628.10,398.50 577.40,351.60Q548.10,408.50 482.50,424.60C486.10,400.00 481.60,374.00 474.70,357.20Q460.60,373.50 454.40,395.20Q445.10,391.60 434.10,392.00Z" fill="#000"/></g></svg>
<div class="abs" style="left:1129px;top:741.5px;width:312px;height:1px;background:#e8e8e8"></div>
<div class="abs" style="left:1144.5px;top:757.5px;width:19px;height:19px;border:1px solid #dadada;border-radius:3px;background:#fff"></div>
<span class="t" style="left:1171.16px;top:761.00px;font-size:13px;color:#2a2a2a;letter-spacing:-0.122px;">Background Color</span>
<div class="abs" style="left:1129px;top:790.5px;width:312px;height:1px;background:#ececec"></div>
<svg class="ic" style="left:0;top:0;stroke:#e7e7e7;stroke-width:1.4;" width="1442" height="842" viewBox="0 0 1442 842"><path d="M1167.5,803.2A6,6 0 1 0 1162.6,811.8"/><rect x="1162.3" y="804.9" width="11" height="11" rx="0.8"/><path d="M1162.3,804.9L1168,804.9L1162.3,810.8"/><rect x="1208.6" y="799.6" width="11" height="10.8" rx="0.8"/><circle cx="1219.7" cy="810.3" r="5.8"/><path d="M1335.9,798.4V804M1333.2,801.6L1335.9,804.2L1338.6,801.6M1331,805L1328.2,806.6L1335.9,810.9L1343.7,806.6L1340.8,805M1328.2,810.4L1335.9,815.3L1343.7,810.4"/><circle cx="1393.2" cy="807.5" r="9.6" stroke-dasharray="4.2 3.3"/></svg>
<svg class="abs" style="left:0;top:0" width="1442" height="842" viewBox="0 0 1442 842"><path d="M1232.4,806.3H1238.2L1235.3,809.4Z" fill="#e0e0e0"/><path d="M1440,834.5V840H1434.5Z" fill="#b5b5b5"/></svg>
<svg class="ic" style="left:0;top:0;stroke:#222;stroke-width:1.45;" width="1442" height="842" viewBox="0 0 1442 842"><path d="M1284.50,802.50H1274.50A4.85,4.85 0 0 0 1274.50,812.20H1285.10A3.25,3.25 0 0 0 1285.10,805.70H1275.20A1.75,1.75 0 0 0 1275.20,809.20H1283.40"/></svg>
<span class="t" style="left:1153.35px;top:824.53px;font-size:10px;color:#dedede;letter-spacing:0.375px;">Slice</span>
<span class="t" style="left:1200.90px;top:824.53px;font-size:10px;color:#dedede;letter-spacing:0.450px;">Combine</span>
<span class="t" style="left:1264.10px;top:824.53px;font-size:10px;color:#222;letter-spacing:0.390px;">Attach</span>
<span class="t" style="left:1319.20px;top:824.53px;font-size:10px;color:#dedede;letter-spacing:0.325px;">Flatten</span>
<span class="t" style="left:1373.30px;top:824.53px;font-size:10px;color:#dedede;letter-spacing:0.625px;">Contour</span>
<div class="abs" style="left:1px;top:66px;width:1440px;height:3px;background:linear-gradient(rgba(0,0,0,0.055),rgba(0,0,0,0))"></div>
<!-- FRAME -->
<div class="abs" style="left:1px;top:1px;width:1440px;height:840px;border:1px solid #a2a2a2;border-top:none;pointer-events:none"></div>
<div class="abs" style="left:0;top:0;width:1442px;height:842px;border:1px solid #000;pointer-events:none"></div>
</div>
</body></html>
